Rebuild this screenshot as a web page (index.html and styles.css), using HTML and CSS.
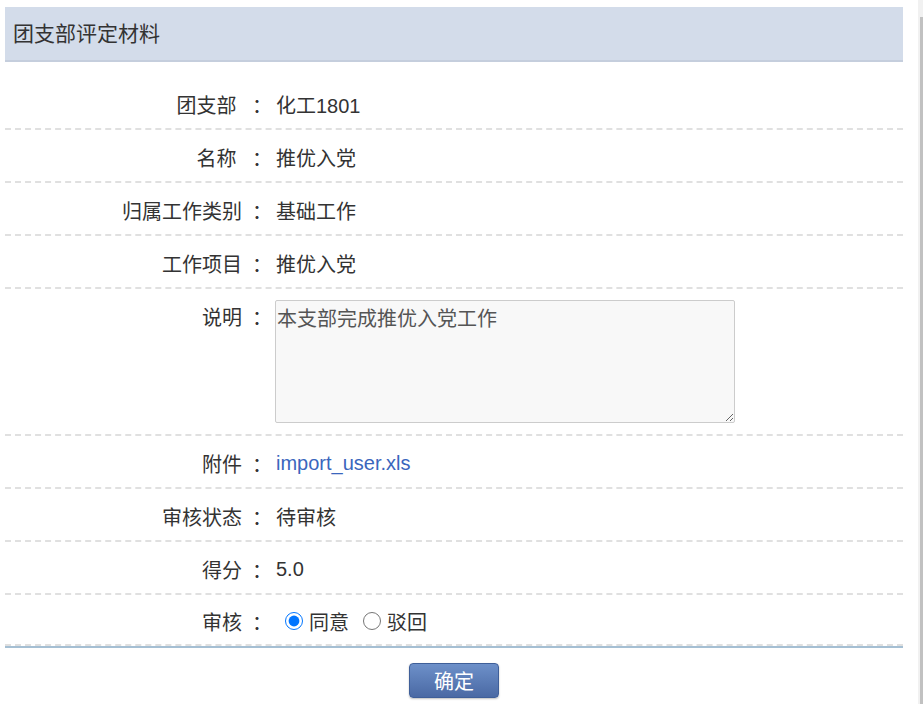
FILE: index.html
```html
<!DOCTYPE html>
<html lang="zh-CN">
<head>
  <meta charset="UTF-8">
  <meta name="viewport" content="width=device-width, initial-scale=1.0">
  <title>团支部评定材料</title>
  <link rel="stylesheet" href="styles.css">
</head>
<body>

<div class="main">
  <div class="panel-title">团支部评定材料</div>

  <div class="form-table">
    <div class="row">
      <div class="label">团支部 <span class="colon">：</span></div>
      <div class="value">化工1801</div>
    </div>
    <div class="row">
      <div class="label">名称 <span class="colon">：</span></div>
      <div class="value">推优入党</div>
    </div>
    <div class="row">
      <div class="label">归属工作类别<span class="colon">：</span></div>
      <div class="value">基础工作</div>
    </div>
    <div class="row">
      <div class="label">工作项目<span class="colon">：</span></div>
      <div class="value">推优入党</div>
    </div>
    <div class="row row-tall">
      <div class="label">说明<span class="colon">：</span></div>
      <div class="value">
        <textarea class="remark" readonly>本支部完成推优入党工作</textarea>
      </div>
    </div>
    <div class="row">
      <div class="label">附件<span class="colon">：</span></div>
      <div class="value"><a class="file-link" href="#">import_user.xls</a></div>
    </div>
    <div class="row">
      <div class="label">审核状态<span class="colon">：</span></div>
      <div class="value">待审核</div>
    </div>
    <div class="row">
      <div class="label">得分<span class="colon">：</span></div>
      <div class="value">5.0</div>
    </div>
    <div class="row row-last">
      <div class="label">审核<span class="colon">：</span></div>
      <div class="value radio-group">
        <label class="radio"><input type="radio" name="audit" checked>同意</label>
        <label class="radio"><input type="radio" name="audit">驳回</label>
      </div>
    </div>
  </div>

  <div class="actions">
    <button class="btn-ok">确定</button>
  </div>
</div>

<div class="scrollbar">
  <div class="scrollbar-thumb"></div>
</div>

</body>
</html>
```

FILE: styles.css
```css
:root {
  --title-bg: #d3dcea;
  --title-border: #c5cedd;
  --text-color: #333;
  --dash-color: #e0e0e0;
  --link-color: #3a66bd;
}
html, body {
  height: 100%;
}
body {
  margin: 0;
  display: flex;
  font-family: "Liberation Sans", "Noto Sans CJK SC", sans-serif;
  color: var(--text-color);
  background-color: #fff;
  overflow: hidden;
}
.main {
  flex: 1;
  padding: 7px 15px 0 5px;
}
.panel-title {
  height: 53px;
  line-height: 53px;
  padding-left: 8px;
  font-size: 21px;
  background-color: var(--title-bg);
  border-bottom: 2px solid var(--title-border);
}
.form-table {
  margin-top: 15px;
  border-bottom: 2px solid #a5bfd3;
}
.row {
  display: flex;
  align-items: center;
  height: 51px;
  font-size: 20px;
  border-bottom: 2px dashed var(--dash-color);
}
.row-tall {
  height: 145px;
  align-items: flex-start;
}
.row-last {
  height: 49px;
}
.label {
  width: 257px;
  text-align: right;
  padding-top: 3px;
}
.colon {
  padding-left: 10px;
  margin-right: -10px;
}
.row-tall .label {
  padding-top: 13px;
}
.value {
  margin-left: 14px;
  padding-top: 3px;
}
.row-tall .value {
  padding-top: 11px;
  margin-left: 13px;
}
.remark {
  display: block;
  width: 460px;
  height: 123px;
  box-sizing: border-box;
  padding: 2px 1px;
  font-family: "Liberation Sans", "Noto Sans CJK SC", sans-serif;
  font-size: 20px;
  color: #555;
  background-color: #f8f8f8;
  border: 1px solid #ccc;
  border-radius: 2px;
}
.file-link {
  color: var(--link-color);
  text-decoration: none;
}
.radio-group {
  display: flex;
  align-items: center;
  padding-left: 9px;
}
.radio {
  display: flex;
  align-items: center;
  margin-right: 14px;
}
.radio input {
  width: 18px;
  height: 18px;
  margin: 0 6px 0 0;
}
.actions {
  display: flex;
  justify-content: center;
  padding-top: 15px;
}
.btn-ok {
  width: 90px;
  height: 35px;
  font-family: "Liberation Sans", "Noto Sans CJK SC", sans-serif;
  font-size: 20px;
  color: #fff;
  background: linear-gradient(#6d90c9, #4a69a4);
  border: 1px solid #3f5f99;
  border-radius: 4px;
  box-shadow: 0 1px 2px rgba(0, 0, 0, 0.25);
  cursor: pointer;
}
.scrollbar {
  width: 3px;
  padding: 17px 0 0 2px;
  background-color: #f1f1f1;
}
.scrollbar-thumb {
  height: 100%;
  background-color: #c1c1c1;
}
```
